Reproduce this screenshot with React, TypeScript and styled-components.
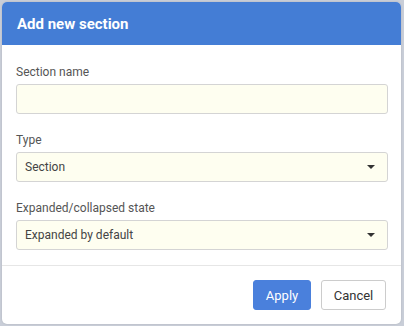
import React from "react";
import styled, { createGlobalStyle } from "styled-components";

const Global = createGlobalStyle`
  html, body {
    margin: 0;
    padding: 0;
    background: #c9ced8;
    font-family: Roboto, "Liberation Sans", sans-serif;
  }
`;

const Page = styled.div`
  padding: 2px 3px 2px 2px;
`;

const Dialog = styled.div`
  width: 399px;
  height: 322px;
  background: #ffffff;
  border-radius: 5px;
  overflow: hidden;
  display: flex;
  flex-direction: column;
  box-shadow: 0 0 2px rgba(0, 0, 0, 0.15);
`;

const Header = styled.div`
  height: 43px;
  flex: none;
  background: #447dd5;
  display: flex;
  align-items: center;
  padding-left: 15px;
  color: #ffffff;
  font-size: 15px;
  font-weight: 700;
`;

const Body = styled.div`
  padding: 20px 13px 15px 14px;
  display: flex;
  flex-direction: column;
  gap: 19px;
  border-bottom: 1px solid #e6e6e6;
`;

const Field = styled.div`
  display: flex;
  flex-direction: column;
  gap: 5px;
`;

const Label = styled.label`
  font-size: 12px;
  line-height: 14px;
  color: #555555;
`;

const Input = styled.div`
  height: 28px;
  background: #fefef0;
  border: 1px solid #d4d4d4;
  border-radius: 3px;
  display: flex;
  align-items: center;
  justify-content: space-between;
  padding: 0 12px 0 8px;
  font-size: 12px;
  color: #444444;
`;

const Caret = styled.span`
  width: 0;
  height: 0;
  border-left: 4px solid transparent;
  border-right: 4px solid transparent;
  border-top: 4px solid #333333;
`;

const Footer = styled.div`
  flex: 1;
  display: flex;
  justify-content: flex-end;
  align-items: center;
  gap: 10px;
  padding-right: 15px;
`;

const Button = styled.button<{ $primary?: boolean }>`
  height: 30px;
  width: ${(p) => (p.$primary ? "58px" : "65px")};
  padding: 0;
  border-radius: 3px;
  font-family: Roboto, "Liberation Sans", sans-serif;
  font-size: 13px;
  cursor: pointer;
  background: ${(p) => (p.$primary ? "#4a80dc" : "#ffffff")};
  color: ${(p) => (p.$primary ? "#ffffff" : "#333333")};
  border: 1px solid ${(p) => (p.$primary ? "#4a80dc" : "#cccccc")};
`;

const Select = ({ value }: { value: string }) => (
  <Input>
    <span>{value}</span>
    <Caret />
  </Input>
);

export default function App() {
  return (
    <Page>
      <Global />
      <Dialog>
        <Header>Add new section</Header>
        <Body>
          <Field>
            <Label>Section name</Label>
            <Input />
          </Field>
          <Field>
            <Label>Type</Label>
            <Select value="Section" />
          </Field>
          <Field>
            <Label>Expanded/collapsed state</Label>
            <Select value="Expanded by default" />
          </Field>
        </Body>
        <Footer>
          <Button $primary>Apply</Button>
          <Button>Cancel</Button>
        </Footer>
      </Dialog>
    </Page>
  );
}
